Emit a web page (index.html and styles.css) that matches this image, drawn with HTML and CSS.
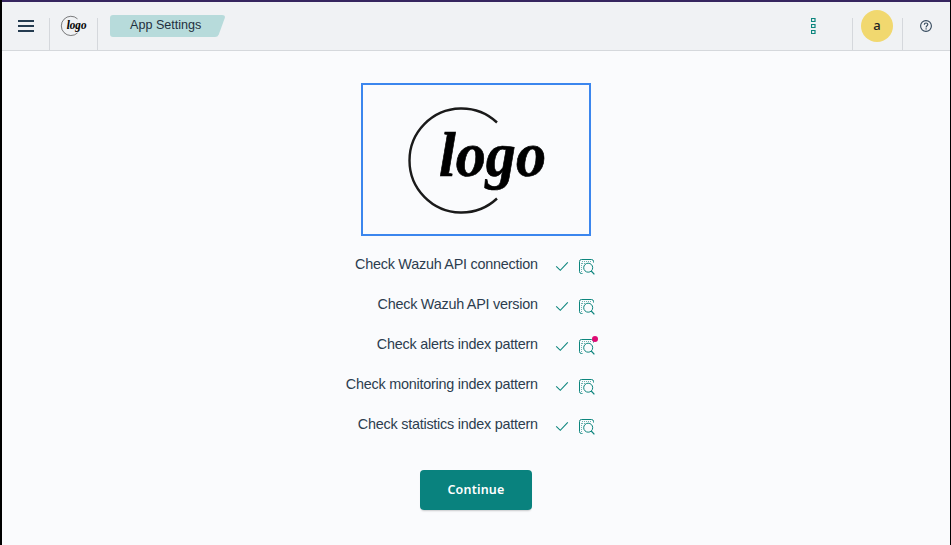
FILE: index.html
```html
<!DOCTYPE html>
<html lang="en">
<head>
<meta charset="utf-8">
<title>App Settings</title>
<link rel="stylesheet" href="styles.css">
</head>
<body>
<svg class="defs" width="0" height="0" aria-hidden="true">
  <symbol id="check" viewBox="0 0 16 16">
    <path d="M2.200 8.300 L6.300 12.300 L13.800 4.400" fill="none" stroke="#0c857d" stroke-width="1.100"/>
  </symbol>
  <symbol id="inspect" viewBox="0 0 16 16">
    <g fill="none" stroke="#0c857d">
      <path d="M3.500 14.500 H2.500 Q.5 14.500 .5 12.500 V2.500 Q.5 .5 2.500 .5 H12.500 Q14.500 .5 14.500 2.500 V3.500"/>
      <path d="M3 2.500H13M3 4.500H6" stroke-dasharray="1 1" opacity=".6"/>
      <path d="M2.500 4V13" stroke-dasharray="1 1" opacity=".6"/>
      <circle cx="9.200" cy="8.700" r="4.500"/>
      <path d="M12.200 12 L15.400 15.400" stroke-width="1.200"/>
    </g>
  </symbol>
</svg>
<div class="app">
  <header class="header">
    <button class="cell menu" aria-label="Menu"><svg width="16" height="12" viewBox="0 0 16 12"><path d="M0 1H16M0 6H16M0 11H16" stroke="#253c50" stroke-width="2"/></svg></button>
    <div class="cell brand"><svg class="logo" width="26" height="20" viewBox="0 0 140 108"><path d="M89 15.500 A52 52 0 1 0 89 91.500" fill="none" stroke="#1a1a1a" stroke-width="3"/><text class="logo-text" x="31" y="68.500" textLength="106" lengthAdjust="spacingAndGlyphs">logo</text></svg></div>
    <div class="crumb">
      <svg class="crumb-shape" width="115" height="22" viewBox="0 0 115 22"><path d="M3 0H112Q115.500 0 114.800 3L108.800 19.500Q107.800 22 105 22H3Q0 22 0 19V3Q0 0 3 0Z" fill="#b7dbdb"/></svg>
      <span class="crumb-label">App Settings</span>
    </div>
    <button class="more" aria-label="More"><svg width="5" height="16" viewBox="0 0 5 16"><path d="M.5 .5h3.500v3h-3.500zM.5 6.500h3.500v3h-3.500zM.5 12.500h3.500v3h-3.500z" fill="none" stroke="#0c857d" stroke-width="1.200"/></svg></button>
    <div class="cell user"><span class="avatar">a</span></div>
    <button class="cell help" aria-label="Help"><svg width="12" height="12" viewBox="0 0 12 12"><g fill="none" stroke="#34495c"><circle cx="6" cy="6" r="5.400" stroke-width="1.100"/><path d="M4.300 4.700C4.300 2.500 7.800 2.500 7.800 4.600C7.800 5.800 6.100 5.800 6.100 7.400M6.100 8.300V9.400" stroke-width="1.150"/></g></svg></button>
  </header>
  <main class="main">
    <div class="logo-frame"><svg class="logo" width="140" height="108" viewBox="0 0 140 108"><path d="M89 15.500 A52 52 0 1 0 89 91.500" fill="none" stroke="#1a1a1a" stroke-width="2.400"/><text class="logo-text" x="31" y="68.500" textLength="107" lengthAdjust="spacingAndGlyphs">logo</text></svg></div>
    <ul class="checks">
      <li><span class="label">Check Wazuh API connection</span><svg class="tick"><use href="#check"/></svg><span class="inspect"><svg><use href="#inspect"/></svg></span></li>
      <li><span class="label">Check Wazuh API version</span><svg class="tick"><use href="#check"/></svg><span class="inspect"><svg><use href="#inspect"/></svg></span></li>
      <li><span class="label">Check alerts index pattern</span><svg class="tick"><use href="#check"/></svg><span class="inspect notify"><svg><use href="#inspect"/></svg></span></li>
      <li><span class="label">Check monitoring index pattern</span><svg class="tick"><use href="#check"/></svg><span class="inspect"><svg><use href="#inspect"/></svg></span></li>
      <li><span class="label">Check statistics index pattern</span><svg class="tick"><use href="#check"/></svg><span class="inspect"><svg><use href="#inspect"/></svg></span></li>
    </ul>
    <button class="continue">Continue</button>
  </main>
</div>
</body>
</html>
```
FILE: styles.css
```css
* { box-sizing: border-box; }
body { margin: 0; font-family: "Liberation Sans", Arial, sans-serif; color: #2c3d4f; overflow: hidden; }
button { border: 0; padding: 0; background: none; font: inherit; }
svg { display: block; }
.defs { position: absolute; }
.logo { overflow: visible; }
.logo-text { font: italic bold 64px "Liberation Serif", serif; fill: #000; stroke: #000; stroke-width: .7px; }

.app { height: 545px; border-left: 2px solid #000; border-right: 1px solid #000; background: #fafbfd; }
.header { display: flex; height: 51px; border-top: 2px solid #36265f; border-bottom: 1px solid #d5d8dc; background: #f0f2f4; align-items: flex-end; }
.cell { display: flex; height: 32px; justify-content: center; }
.menu { width: 48px; border-right: 1px solid #d5d8dc; padding-top: 2px; align-items: flex-start; }
.brand { width: 48px; border-right: 1px solid #d5d8dc; }
.brand svg { margin-top: -2px; margin-left: 1px; }
.crumb { position: relative; width: 115px; height: 22px; margin: 0 0 13px 12px; }
.crumb-shape { position: absolute; inset: 0; }
.crumb-label { position: relative; display: block; padding-left: 20px; font-size: 12.600px; line-height: 21px; color: #1f3040; white-space: nowrap; }
.more { margin-left: auto; margin-right: 36px; margin-bottom: 16px; }
.user { width: 50px; border-left: 1px solid #d5d8dc; }
.avatar { flex: none; width: 32px; height: 32px; margin: -8px 1px 0 0; border-radius: 50%; background: #f1d86f; color: #222; font: 500 13px/31px "Noto Sans", sans-serif; text-align: center; }
.help { width: 48px; border-left: 1px solid #d5d8dc; padding: 2px 2px 0 0; }

.main { display: flex; flex-direction: column; align-items: center; padding: 32px 1px 0 0; }
.logo-frame { display: flex; width: 230px; height: 153px; border: 2px solid #3b86ee; padding: 22px 0 0 45px; }
.checks { width: 260px; margin: 8px 0 0; padding: 0; list-style: none; }
.checks li { display: flex; height: 40px; align-items: flex-start; }
.label { width: 203px; margin-left: -10px; padding: 10px .7px 0 0; font-size: 14.400px; letter-spacing: -.24px; line-height: 20px; text-align: right; white-space: nowrap; }
.tick { flex: none; width: 16px; height: 16px; margin: 14px 0 0 15px; }
.inspect { position: relative; flex: none; width: 16px; height: 16px; margin: 15px 0 0 9px; }
.inspect svg { width: 16px; height: 16px; }
.notify::after { content: ""; position: absolute; left: 13px; top: -3px; width: 6px; height: 6px; border-radius: 50%; background: #dd0a73; }
.continue { width: 112px; height: 40px; margin-top: 26px; border-radius: 4px; background: #09827e; color: #fff; box-shadow: 0 2px 2px -1px #0003; font: 600 12.500px/38px "Noto Sans", sans-serif; letter-spacing: .2px; padding: 0 0 1px 1px; }
```
